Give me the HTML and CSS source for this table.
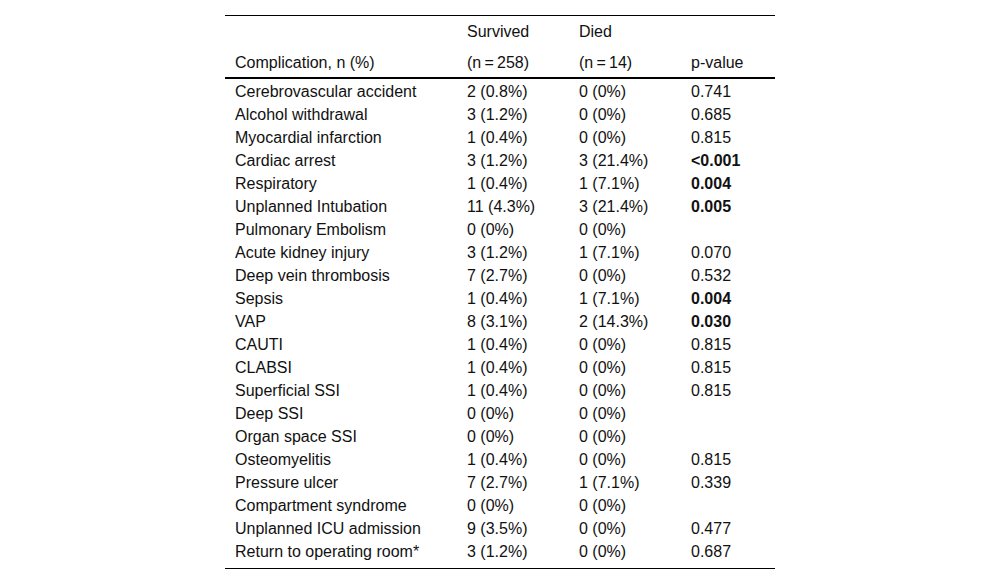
FILE: index.html
```html
<!DOCTYPE html>
<html>
<head>
<meta charset="utf-8">
<link rel="stylesheet" href="styles.css">
</head>
<body>
<table class="tbl">
<colgroup><col class="c1"><col class="c2"><col class="c3"><col class="c4"></colgroup>
<thead>
<tr class="h1"><th></th><th>Survived</th><th>Died</th><th></th></tr>
<tr class="h2"><th>Complication, n (%)</th><th>(n&#8201;=&#8201;258)</th><th>(n&#8201;=&#8201;14)</th><th>p-value</th></tr>
</thead>
<tbody>
<tr><td>Cerebrovascular accident</td><td>2 (0.8%)</td><td>0 (0%)</td><td>0.741</td></tr>
<tr><td>Alcohol withdrawal</td><td>3 (1.2%)</td><td>0 (0%)</td><td>0.685</td></tr>
<tr><td>Myocardial infarction</td><td>1 (0.4%)</td><td>0 (0%)</td><td>0.815</td></tr>
<tr><td>Cardiac arrest</td><td>3 (1.2%)</td><td>3 (21.4%)</td><td><b>&lt;0.001</b></td></tr>
<tr><td>Respiratory</td><td>1 (0.4%)</td><td>1 (7.1%)</td><td><b>0.004</b></td></tr>
<tr><td>Unplanned Intubation</td><td>11 (4.3%)</td><td>3 (21.4%)</td><td><b>0.005</b></td></tr>
<tr><td>Pulmonary Embolism</td><td>0 (0%)</td><td>0 (0%)</td><td></td></tr>
<tr><td>Acute kidney injury</td><td>3 (1.2%)</td><td>1 (7.1%)</td><td>0.070</td></tr>
<tr><td>Deep vein thrombosis</td><td>7 (2.7%)</td><td>0 (0%)</td><td>0.532</td></tr>
<tr><td>Sepsis</td><td>1 (0.4%)</td><td>1 (7.1%)</td><td><b>0.004</b></td></tr>
<tr><td>VAP</td><td>8 (3.1%)</td><td>2 (14.3%)</td><td><b>0.030</b></td></tr>
<tr><td>CAUTI</td><td>1 (0.4%)</td><td>0 (0%)</td><td>0.815</td></tr>
<tr><td>CLABSI</td><td>1 (0.4%)</td><td>0 (0%)</td><td>0.815</td></tr>
<tr><td>Superficial SSI</td><td>1 (0.4%)</td><td>0 (0%)</td><td>0.815</td></tr>
<tr><td>Deep SSI</td><td>0 (0%)</td><td>0 (0%)</td><td></td></tr>
<tr><td>Organ space SSI</td><td>0 (0%)</td><td>0 (0%)</td><td></td></tr>
<tr><td>Osteomyelitis</td><td>1 (0.4%)</td><td>0 (0%)</td><td>0.815</td></tr>
<tr><td>Pressure ulcer</td><td>7 (2.7%)</td><td>1 (7.1%)</td><td>0.339</td></tr>
<tr><td>Compartment syndrome</td><td>0 (0%)</td><td>0 (0%)</td><td></td></tr>
<tr><td>Unplanned ICU admission</td><td>9 (3.5%)</td><td>0 (0%)</td><td>0.477</td></tr>
<tr class="last"><td>Return to operating room*</td><td>3 (1.2%)</td><td>0 (0%)</td><td>0.687</td></tr>
</tbody>
</table>
</body>
</html>
```
FILE: styles.css
```css
html, body {
  margin: 0;
  padding: 0;
  background: #fff;
}
body {
  font-family: "Liberation Sans", Arial, sans-serif;
  font-size: 16px;
  color: #111;
}
.tbl {
  width: 550px;
  margin: 15px auto 0;
  border-collapse: collapse;
  table-layout: fixed;
  border-top: 1px solid #000;
  border-bottom: 1px solid #000;
}
.c1 { width: 232px; }
.c2 { width: 112px; }
.c3 { width: 112px; }
.c4 { width: 94px; }
.tbl th, .tbl td {
  text-align: left;
  font-weight: normal;
  padding: 0 0 0 10px;
  white-space: nowrap;
  vertical-align: middle;
  line-height: 18px;
}
.tbl td b { font-weight: bold; }
.tbl thead th { padding-top: 2px; }
.tbl thead tr.h1 th { height: 28px; }
.tbl thead tr.h2 th { height: 29px; border-bottom: 2px solid #000; }
.tbl tbody tr:first-child td { padding-top: 1px; }
.tbl tbody td { height: 23px; }
.tbl tbody tr.last td { padding-bottom: 5px; }
```
